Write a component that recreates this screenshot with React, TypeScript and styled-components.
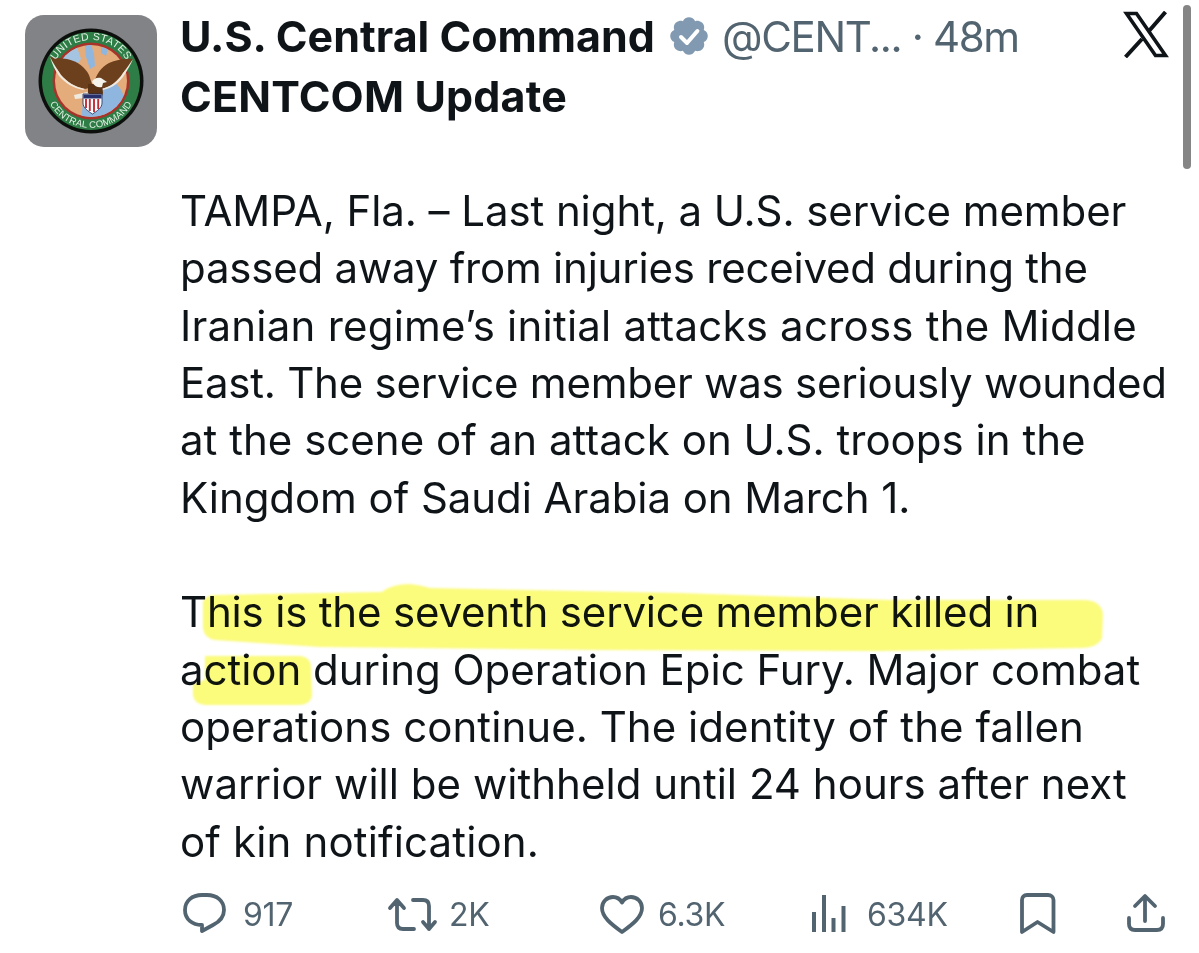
import React from "react";
import styled, { createGlobalStyle } from "styled-components";

const Global = createGlobalStyle`
  html, body { margin: 0; padding: 0; background: #fff; }
  body { font-family: Inter, "Liberation Sans", sans-serif; color: #0f1419; }
`;

const Page = styled.div`
  position: relative;
  width: 1199px;
  height: 953px;
  overflow: hidden;
  box-sizing: border-box;
  padding: 15px 0 0 25px;
  display: grid;
  grid-template-columns: 132px 1fr;
  column-gap: 23px;
  background: #fff;
`;
const Avatar = styled.div`
  width: 132px;
  height: 132px;
  border-radius: 19px;
  background: #828387;
  overflow: hidden;
  svg { display: block; }
`;
const Main = styled.div`
  display: flex;
  flex-direction: column;
`;
const HeaderRow = styled.div`
  display: flex;
  align-items: center;
  height: 42px;
`;
const Name = styled.span`
  font-size: 43px;
  font-weight: 700;
  letter-spacing: 0;
  white-space: nowrap;
`;
const Badge = styled.svg`
  width: 44px;
  height: 44px;
  margin-left: 12px;
  flex: none;
`;
const Meta = styled.span`
  font-size: 42px;
  color: #536471;
  letter-spacing: -1.35px;
  margin-left: 11px;
  white-space: nowrap;
`;
const XMark = styled.svg`
  position: absolute;
  left: 1123px;
  top: 11px;
  width: 46px;
  height: 47px;
  fill: none;
  stroke: #0f1419;
  stroke-width: 3.6;
`;
const Title = styled.div`
  font-size: 43px;
  font-weight: 700;
  letter-spacing: 0.15px;
  line-height: 50px;
  margin-top: 14px;
`;
const Tweet = styled.div`
  margin-top: 61px;
  font-size: 42px;
  line-height: 57.35px;
  white-space: nowrap;
`;
const Para = styled.p`
  margin: 0;
  & + & { margin-top: 57.35px; }
`;
const Line = styled.span<{ $track: number }>`
  display: block;
  letter-spacing: ${(p) => p.$track}px;
`;
const Actions = styled.div`
  display: grid;
  grid-template-columns: 205px 213px 210px 208px 109px 38px;
  align-items: center;
  margin-top: 19.5px;
  padding-left: 2px;
  height: 50px;
`;
const Action = styled.div<{ $gap?: number }>`
  display: flex;
  align-items: center;
  gap: ${(p) => p.$gap ?? 0}px;
  color: #536471;
  font-size: 32px;
  letter-spacing: -0.3px;
`;
const ActionIcon = styled.svg<{ $butt?: boolean }>`
  display: block;
  flex: none;
  height: 44px;
  margin-top: -4px;
  fill: none;
  stroke: #536471;
  stroke-width: ${(p) => (p.$butt ? 4 : 3.8)};
  stroke-linejoin: ${(p) => (p.$butt ? "miter" : "round")};
  stroke-linecap: ${(p) => (p.$butt ? "butt" : "round")};
`;
const Scrollbar = styled.div`
  position: absolute;
  left: 1183px;
  top: 5px;
  width: 8px;
  height: 164px;
  border-radius: 4px;
  background: #858585;
`;
const Highlight = styled.svg`
  position: absolute;
  left: 0;
  top: 0;
  width: 1199px;
  height: 953px;
  mix-blend-mode: multiply;
  pointer-events: none;
  filter: blur(1px);
  path { fill: #fbfb7c; }
`;

function Emblem() {
  return (
    <svg width="132" height="132" viewBox="0 0 132 132">
      <defs>
        <path id="topArc" d="M 25 66 A 41 41 0 0 1 107 66" />
        <path id="botArc" d="M 19 66 A 47 47 0 0 0 113 66" />
        <clipPath id="inner"><circle cx="66" cy="66" r="36" /></clipPath>
      </defs>
      <circle cx="66" cy="66" r="52.500" fill="#0c0f0c" />
      <circle cx="66" cy="66" r="49" fill="#2e7d46" />
      <circle cx="66" cy="66" r="38.500" fill="#a8332b" />
      <circle cx="66" cy="66" r="36" fill="#e4ab7b" />
      <g clipPath="url(#inner)">
        <path d="M72 74c6-4 12-6 18-6 5 4 9 10 9 18L80 108H56l2-22c6-1 11-6 14-12z" fill="#8fb6de" />
        <path d="M34 44c4-6 10-10 18-12l4 12-6 8-10-4z" fill="#a4c4e2" />
        <path d="M60 31l6-2 3 10 1 12-5 3-4-12zM76 32l7 2-2 7-5-3z" fill="#8fb6de" />
      </g>
      <path d="M25 42L42 44C52 46 60 52 64 60L68 72L60 74C50 72 42 67 36 60C32 54 28 48 25 42z" fill="#6c3f1d" />
      <path d="M108 44C100 43 91 45 84 48C76 52 71 60 69 68L76 74C86 72 93 66 98 58C102 53 105 48 108 44z" fill="#6c3f1d" />
      <path d="M25 42C28 48 32 54 36 60C42 67 50 72 60 74L58 75C48 73 40 68 34 61C30 55 27 49 25 42z" fill="#efeadf" />
      <path d="M108 44C105 48 102 53 98 58C93 66 86 72 76 74L78 75C88 73 95 67 100 59C103 54 106 49 108 44z" fill="#efeadf" />
      <path d="M63 69h14l1 9-3 9-7 1-5-9z" fill="#5a3216" />
      <path d="M67 67c1-3 5-5 9-4l6 4-4 1-1 4c-3 1-7 0-10-5z" fill="#f4f2ea" />
      <path d="M49 80l13-3 3 3-5 3-10 1z" fill="#efeadf" />
      <path d="M58 79h19v9c0 5-5 8-9.500 11C63 96 58 93 58 88z" fill="#fff" stroke="#1f2a55" strokeWidth="0.800" />
      <path d="M58.400 79.400h18.200v4h-18.200z" fill="#27306b" />
      <path d="M61 84v9M64.800 84v12M69 84v13M73.200 84v10" stroke="#c22c36" strokeWidth="1.900" fill="none" />
      <text fontFamily="'Liberation Sans', sans-serif" fontSize="10.500" fill="#e4f0e4" letterSpacing="0.3">
        <textPath href="#topArc" startOffset="50%" textAnchor="middle">UNITED STATES</textPath>
      </text>
      <text fontFamily="'Liberation Sans', sans-serif" fontSize="9.500" fill="#e4f0e4" letterSpacing="0.2">
        <textPath href="#botArc" startOffset="50%" textAnchor="middle">CENTRAL COMMAND</textPath>
      </text>
    </svg>
  );
}

const firstParagraph: [string, number][] = [
  ["TAMPA, Fla. – Last night, a U.S. service member", -0.08],
  ["passed away from injuries received during the", -0.22],
  ["Iranian regime’s initial attacks across the Middle", 0.22],
  ["East. The service member was seriously wounded", -0.235],
  ["at the scene of an attack on U.S. troops in the", 0.02],
  ["Kingdom of Saudi Arabia on March 1.", -0.07],
];
const secondParagraph: [string, number][] = [
  ["This is the seventh service member killed in", -0.18],
  ["action during Operation Epic Fury. Major combat", -0.03],
  ["operations continue. The identity of the fallen", 0.05],
  ["warrior will be withheld until 24 hours after next", 0.02],
  ["of kin notification.", 0.15],
];

export default function App() {
  return (
    <>
      <Global />
      <Page>
        <Avatar><Emblem /></Avatar>
        <Main>
          <HeaderRow>
            <Name>U.S. Central Command</Name>
            <Badge viewBox="0 0 22 22">
              <path fill="#829ab1" d="M20.396 11c-.018-.646-.215-1.275-.57-1.816-.354-.54-.852-.972-1.438-1.246.223-.607.27-1.264.14-1.897-.131-.634-.437-1.218-.882-1.687-.47-.445-1.053-.75-1.687-.882-.633-.13-1.29-.083-1.897.14-.273-.587-.704-1.086-1.245-1.44S11.647 1.62 11 1.604c-.646.017-1.273.213-1.813.568s-.969.854-1.24 1.44c-.608-.223-1.267-.272-1.902-.14-.635.13-1.22.436-1.69.882-.445.47-.749 1.055-.878 1.688-.13.633-.08 1.29.144 1.896-.587.274-1.087.705-1.443 1.245-.356.54-.555 1.17-.574 1.817.02.647.218 1.276.574 1.817.356.54.856.972 1.443 1.245-.224.606-.274 1.263-.144 1.896.13.634.433 1.218.877 1.688.47.443 1.054.747 1.687.878.633.132 1.29.084 1.897-.136.274.586.705 1.084 1.246 1.439.54.354 1.17.551 1.816.569.647-.016 1.276-.213 1.817-.567s.972-.854 1.245-1.44c.604.239 1.266.296 1.903.164.636-.132 1.22-.447 1.68-.907.46-.46.776-1.044.908-1.681s.075-1.299-.165-1.903c.586-.274 1.084-.705 1.439-1.246.354-.54.551-1.17.569-1.816z" />
              <path d="M7 11.500l3 3 5.200-6" fill="none" stroke="#fff" strokeWidth="2" strokeLinecap="round" strokeLinejoin="round" />
            </Badge>
            <Meta>@CENT... · 48m</Meta>
          </HeaderRow>
          <Title>CENTCOM Update</Title>
          <Tweet>
            <Para>
              {firstParagraph.map(([text, track]) => <Line key={text} $track={track}>{text}</Line>)}
            </Para>
            <Para>
              {secondParagraph.map(([text, track]) => <Line key={text} $track={track}>{text}</Line>)}
            </Para>
          </Tweet>
          <Actions>
            <Action $gap={17}>
              <ActionIcon width="44" viewBox="0 0 44 44">
                <path d="M20 4h5C35 4 42 10 42 19 42 26 37 31 31 34L20 40V34C10 34 3 28 3 19 3 10 10 4 20 4z" />
              </ActionIcon>
              917
            </Action>
            <Action $gap={10}>
              <ActionIcon width="52" viewBox="0 0 52 44">
                <path d="M3 17l7-8 7 8M10 10v22c0 4 2 6 6 6h11M26 9h10c4 0 6 2 6 6v23M36 31l6 7 6-7" />
              </ActionIcon>
              2K
            </Action>
            <Action $gap={14}>
              <ActionIcon width="44" viewBox="0 0 44 44">
                <path d="M22 41C11 33 2 26 2 17 2 10.500 7 6 13 6c4 0 7 2 9 5.500 2-3.500 5-5.500 9-5.500 6 0 11 4.500 11 11 0 9-9 16-20 24z" />
              </ActionIcon>
              6.3K
            </Action>
            <Action $gap={21}>
              <ActionIcon $butt width="36" viewBox="0 0 36 44">
                <path d="M4 21v20M14 4v37M23.500 27v14M33.500 15v26" />
              </ActionIcon>
              634K
            </Action>
            <Action>
              <ActionIcon width="38" viewBox="0 0 38 44">
                <path d="M4 41V9c0-3 2-5 5-5h21c3 0 5.500 2 5.500 5v32L19.500 31z" />
              </ActionIcon>
            </Action>
            <Action>
              <ActionIcon width="38" viewBox="0 0 38 44">
                <path d="M18 30V6M8 15L18 5l10 10M2 27v6c0 4 2 6 6 6h22c4 0 6-2 6-6v-6" />
              </ActionIcon>
            </Action>
          </Actions>
        </Main>
        <XMark viewBox="0 0 46 47">
          <path d="M3.500 2.500h10L42.500 44.500H32.500z" />
          <path d="M42.500 1L26 20M19 28L2.500 46" strokeWidth="4" />
        </XMark>
        <Scrollbar />
        <Highlight viewBox="0 0 1199 953">
          <path d="M203 602Q204 596 215 595L382 592Q392 584 410 584Q420 585 430 588L680 593L890 600L1085 600Q1102 601 1103 615L1102 638Q1098 648 1080 648L880 651L600 650L320 647L215 640Q204 638 203 628Z" />
          <path d="M205 656L300 656Q311 657 311 668L312 695Q311 705 298 705L205 705Q194 704 193 695L193 684L205 680Z" />
        </Highlight>
      </Page>
    </>
  );
}
